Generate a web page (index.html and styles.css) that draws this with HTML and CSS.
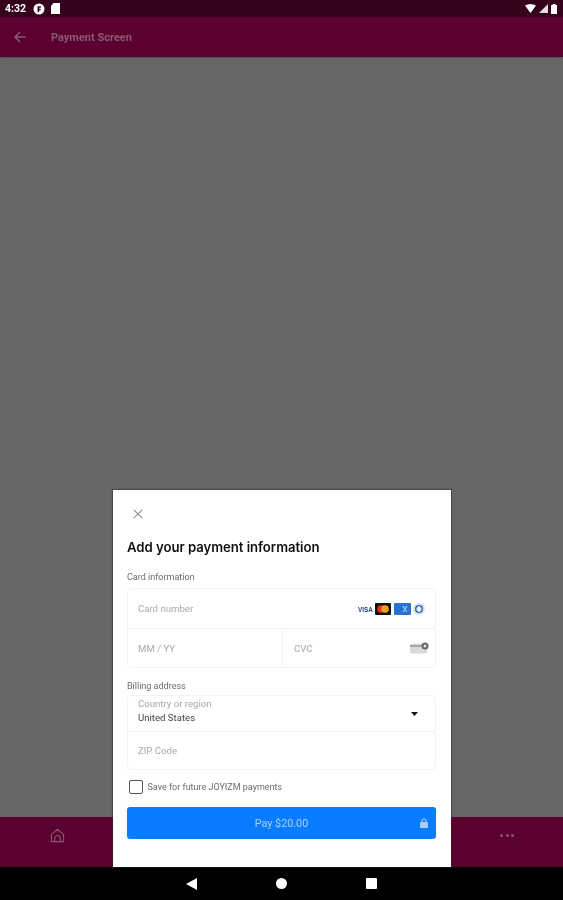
FILE: index.html
```html
<!DOCTYPE html>
<html lang="en">
<head>
<meta charset="utf-8">
<title>Payment Screen</title>
<link rel="stylesheet" href="styles.css">
</head>
<body>
<div class="screen">
  <div class="status">
    <div class="status-left">
      <span class="time">4:32</span>
      <svg class="st-icon" width="12" height="12" viewBox="0 0 12 12"><circle cx="6" cy="6" r="5.5" fill="#fff"/><path d="M4.5 9V3.2h3.4v1.6H6.2v1h1.4v1.4H6.2V9z" fill="#3a0520"/></svg>
      <svg class="st-icon" width="9" height="11" viewBox="0 0 9 11"><path d="M2.5 0H9v11H0V3z" fill="#fff"/></svg>
    </div>
    <div class="status-right">
      <svg width="11" height="9" viewBox="0 0 11 9"><path d="M0 1.5Q5.5-1.5 11 1.5L5.5 9z" fill="#fff"/></svg>
      <svg width="9" height="9" viewBox="0 0 9 9"><path d="M9 0V9H0z" fill="#e4dde0"/></svg>
      <svg width="6" height="10" viewBox="0 0 6 10"><path d="M1.5 0h3v1H6v9H0V1h1.5z" fill="#fff"/></svg>
    </div>
  </div>
  <header class="appbar">
    <svg class="back" width="12" height="12" viewBox="0 0 12 12"><path d="M11.500 6H1.500M6 1 1 6l5 5" fill="none" stroke="#8a5a75" stroke-width="1.500"/></svg>
    <h1 class="appbar-title">Payment Screen</h1>
  </header>
  <main class="content"></main>
  <nav class="tabbar">
    <svg class="tab-home" width="15" height="15" viewBox="0 0 16 16"><path d="M1.500 14.500V7L8 1.500 14.500 7v7.500z" fill="none" stroke="#8a5a75" stroke-width="1.200" stroke-linejoin="round"/><path d="M5 14.500V11a3 3 0 0 1 6 0v3.500" fill="none" stroke="#8a5a75" stroke-width="1.200"/></svg>
    <span class="tab-more"><i></i><i></i><i></i></span>
  </nav>
  <div class="sysnav">
    <svg width="11" height="12" viewBox="0 0 11 12"><path d="M11 0V12L0 6z" fill="#fff"/></svg>
    <svg width="11" height="11" viewBox="0 0 11 11"><circle cx="5.500" cy="5.500" r="5.500" fill="#fff"/></svg>
    <svg width="11" height="11" viewBox="0 0 11 11"><rect width="11" height="11" rx="1" fill="#fff"/></svg>
  </div>

  <section class="sheet">
    <svg class="close" width="10" height="10" viewBox="0 0 10 10"><path d="M.8.8l8.400 8.400M9.200.8.800 9.200" stroke="#8d8d8d" stroke-width="1.200" fill="none"/></svg>
    <h2 class="sheet-title">Add your payment information</h2>
    <div class="label label-card">Card information</div>
    <div class="box card-box">
      <div class="row row-number">
        <span class="ph">Card number</span>
        <span class="brands">
          <svg width="15" height="8" viewBox="0 0 15 8"><text x="0" y="7" class="visa">VISA</text></svg>
          <svg width="16" height="12" viewBox="0 0 16 12"><rect width="16" height="12" rx="1" fill="#111"/><circle cx="6" cy="6" r="3.800" fill="#e8301c"/><circle cx="10" cy="6" r="3.800" fill="#f79e1b"/></svg>
          <svg width="17" height="12" viewBox="0 0 17 12"><rect width="17" height="12" rx="1" fill="#2a72d2"/><path d="M9 3l4 6M13 3 9 9" stroke="#a9c8f0" stroke-width="1.100"/></svg>
          <svg width="12" height="12" viewBox="0 0 12 12"><circle cx="6" cy="6" r="6" fill="#d5e3f3"/><circle cx="6" cy="6" r="3.300" fill="none" stroke="#2a64ae" stroke-width="1.400"/><path d="M6 3v6" stroke="#fff"/></svg>
        </span>
      </div>
      <div class="row-split">
        <div class="cell"><span class="ph">MM / YY</span></div>
        <div class="cell cell-cvc">
          <span class="ph">CVC</span>
          <svg width="19" height="12" viewBox="0 0 19 12"><rect y="1.500" width="17" height="10" rx="1" fill="#d9d9d9"/><rect y="3" width="17" height="2" fill="#a5a5a5"/><circle cx="15" cy="4" r="3.500" fill="#666"/><circle cx="15" cy="4" r="1.500" fill="#ddd"/></svg>
        </div>
      </div>
    </div>
    <div class="label label-billing">Billing address</div>
    <div class="box bill-box">
      <div class="row row-country">
        <div class="country-text">
          <span class="ph">Country or region</span>
          <span class="val">United States</span>
        </div>
        <svg class="caret" width="7" height="4" viewBox="0 0 7 4"><path d="M0 0H7L3.500 4z" fill="#111"/></svg>
      </div>
      <div class="row row-zip"><span class="ph">ZIP Code</span></div>
    </div>
    <label class="save">
      <span class="check"></span>
      <span class="save-text">Save for future JOYIZM payments</span>
    </label>
    <button class="pay" type="button">
      <span>Pay $20.00</span>
      <svg class="lock" width="8" height="10" viewBox="0 0 8 10"><path d="M2 4.500V3a2 2 0 0 1 4 0v1.500" fill="none" stroke="#a9cfff" stroke-width="1.100"/><rect y="4" width="8" height="6" rx="1.200" fill="#a9cfff"/></svg>
    </button>
  </section>
</div>
</body>
</html>
```
FILE: styles.css
```css
* { box-sizing: border-box; }
html, body { margin: 0; padding: 0; }
body { width: 563px; height: 900px; overflow: hidden; font-family: Roboto, "Liberation Sans", sans-serif; background: #000; }
.screen { position: relative; width: 563px; height: 900px; display: flex; flex-direction: column; }

.status { height: 17px; background: #35021d; display: flex; justify-content: space-between; align-items: center; padding: 0 6px 0 5px; filter: blur(.4px); }
.status-left, .status-right { display: flex; align-items: center; }
.status-left { gap: 6px; }
.status-right { gap: 3px; }
.time { color: #fff; font-size: 10.500px; font-weight: 700; width: 22px; }

.appbar { height: 40px; background: #5c0030; display: flex; align-items: center; padding: 0 0 0 14px; gap: 25px; box-shadow: 0 1px 2px rgba(0,0,0,.25); filter: blur(.5px); }
.appbar-title { margin: 0; font-size: 11px; font-weight: 700; color: #8a5a75; white-space: nowrap; }

.content { flex: 1; background: #666; }

.tabbar { height: 50px; background: #5c0030; display: flex; justify-content: space-between; align-items: center; padding: 0 49px 14px 49.500px; }
.tab-more { display: flex; gap: 2.500px; }
.tab-more i { width: 3px; height: 3px; border-radius: 50%; background: #8a5a75; }

.sysnav { height: 33px; background: #000; display: flex; justify-content: center; align-items: center; gap: 79px; filter: blur(.3px); }

.sheet { position: absolute; left: 113px; top: 490px; width: 338px; height: 377px; background: #fff; padding: 0 15px 0 14px; display: flex; flex-direction: column; box-shadow: 0 0 1px 1px rgba(40,40,40,.45); color: #1a1a1a; }
.sheet > *, .row > *, .cell > * { filter: blur(.4px); }
.close { margin: 19px 0 0 6px; flex: none; }
.sheet-title { margin: 20px 0 0; font-size: 13.200px; line-height: 16px; font-weight: 600; font-family: Inter, Roboto, sans-serif; color: #111; letter-spacing: -.05px; }
.label { font-size: 9px; line-height: 10px; color: #6b6b6b; }
.label-card { margin-top: 17px; }
.label-billing { margin-top: 13px; }
.box { border: 1px solid #f3f3f3; border-radius: 4px; filter: none; }
.card-box { margin-top: 6px; height: 80px; display: flex; flex-direction: column; }
.row { display: flex; align-items: center; justify-content: space-between; padding: 0 10px; }
.row-number { height: 40px; border-bottom: 1px solid #f3f3f3; }
.row-split { flex: 1; display: flex; }
.cell { flex: 0 0 154px; display: flex; align-items: center; padding: 0 10px; }
.cell-cvc { flex: 1; border-left: 1px solid #f3f3f3; justify-content: space-between; padding: 0 6px 0 11px; }
.ph { font-size: 9.600px; line-height: 11px; color: #a8a8a8; }
.brands { display: flex; align-items: center; gap: 2.500px; }
.visa { font-size: 6.300px; font-weight: 700; fill: #26407f; font-family: "Liberation Sans", sans-serif; }
.bill-box { margin-top: 4px; height: 75px; display: flex; flex-direction: column; }
.row-country { height: 36px; border-bottom: 1px solid #f3f3f3; padding-right: 17px; }
.country-text { display: flex; flex-direction: column; gap: 3px; padding-bottom: 6px; }
.val { font-size: 9.600px; line-height: 11px; color: #444; }
.row-zip { flex: 1; }
.save { display: flex; align-items: center; gap: 5px; margin: 10px 0 0 2px; }
.check { width: 13.500px; height: 14px; border: 1.200px solid #555; border-radius: 2px; background: #fff; }
.save-text { font-size: 9px; color: #6e6e6e; }
.pay { margin-top: 13px; height: 32px; flex: none; border: 0; border-radius: 3px; background: #0a7cff; color: #a9cfff; font-family: Roboto, sans-serif; font-size: 10.800px; position: relative; display: flex; align-items: center; justify-content: center; }
.lock { position: absolute; right: 8px; top: 11px; }
```
